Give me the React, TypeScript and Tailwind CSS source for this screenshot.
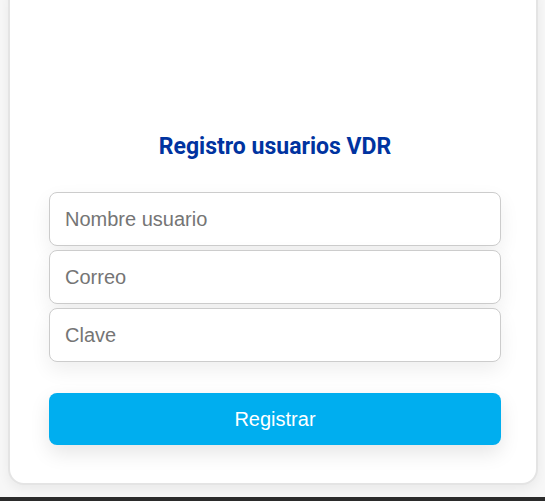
import React from "react";

const fields = ["Nombre usuario", "Correo", "Clave"];

const App: React.FC = () => {
  return (
    <div className="h-[501px] w-[545px] overflow-hidden bg-[#f7f7f7] flex flex-col font-['Liberation_Sans',Arial,sans-serif]">
      <div className="h-[497px] pl-[8px] pr-[7px] overflow-hidden">
        {/* Card */}
        <div className="-mt-[20px] bg-white border-2 border-[#e4e4e4] rounded-[16px] shadow-[0_4px_12px_rgba(0,0,0,0.06)] pt-[151px] pb-[38px] pl-[39px] pr-[35px]">
          <h2 className="h-[28px] leading-[28px] text-center text-[23px] font-bold text-[#0033a0] font-['Roboto',sans-serif]">
            Registro usuarios VDR
          </h2>
          <form className="mt-[31px] flex flex-col gap-[4px]">
            {fields.map((field, index) => (
              <input
                key={index}
                type={field === "Clave" ? "password" : "text"}
                placeholder={field}
                className="h-[54px] w-full px-[15px] text-[20px] text-[#333] placeholder:text-[#757575] bg-white border border-[#cccccc] rounded-[8px] shadow-[0_8px_20px_rgba(0,0,0,0.07)] outline-none"
              />
            ))}
          </form>
          <button className="mt-[31px] h-[52px] w-full rounded-[8px] bg-[#00aeef] text-white text-[20px] shadow-[0_8px_20px_rgba(0,0,0,0.1)]">
            Registrar
          </button>
        </div>
      </div>
      <div className="h-[4px] bg-[#2b2b2b]" />
    </div>
  );
};

export default App;
